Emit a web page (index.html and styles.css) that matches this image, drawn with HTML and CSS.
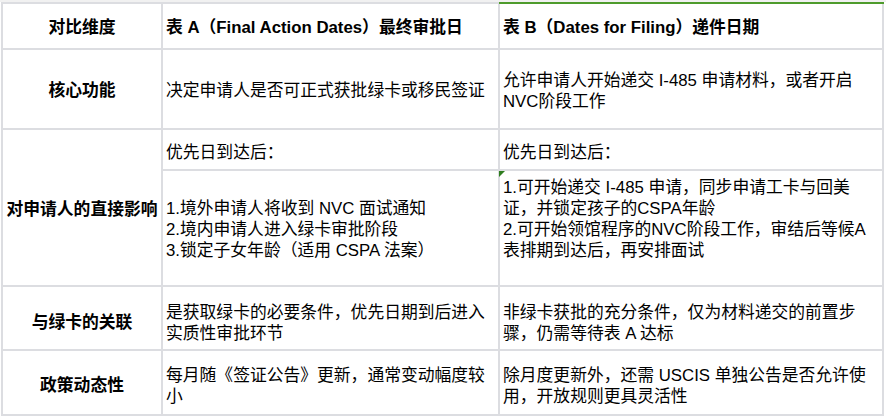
FILE: index.html
```html
<!DOCTYPE html>
<html lang="zh-CN">
<head>
<meta charset="utf-8">
<title>表 A 与 表 B 对比</title>
<link rel="stylesheet" href="styles.css">
</head>
<body>
<div class="sheet">
  <div class="cell head key r-head">对比维度</div>
  <div class="cell head c2 r-head">表 A（Final Action Dates）最终审批日</div>
  <div class="cell head c3 r-head active">表 B（Dates for Filing）递件日期</div>

  <div class="cell key r-2">核心功能</div>
  <div class="cell c2 r-2">决定申请人是否可正式获批绿卡或移民签证</div>
  <div class="cell c3 r-2">允许申请人开始递交 I-485 申请材料，或者开启NVC阶段工作</div>

  <div class="cell key span2 r-3">对申请人的直接影响</div>
  <div class="cell c2 r-3a">优先日到达后：</div>
  <div class="cell c3 r-3a">优先日到达后：</div>
  <div class="cell c2 top r-3b lead-blank">
    <div>1.境外申请人将收到 NVC 面试通知</div>
    <div>2.境内申请人进入绿卡审批阶段</div>
    <div>3.锁定子女年龄（适用 CSPA 法案）</div>
  </div>
  <div class="cell c3 top r-3b noted">
    <div>1.可开始递交 I-485 申请，同步申请工卡与回美证，并锁定孩子的CSPA年龄</div>
    <div>2.可开始领馆程序的NVC阶段工作，审结后等候A表排期到达后，再安排面试</div>
  </div>

  <div class="cell key r-4">与绿卡的关联</div>
  <div class="cell c2 r-4">是获取绿卡的必要条件，优先日期到后进入实质性审批环节</div>
  <div class="cell c3 r-4">非绿卡获批的充分条件，仅为材料递交的前置步骤，仍需等待表 A 达标</div>

  <div class="cell key r-5">政策动态性</div>
  <div class="cell c2 r-5">每月随《签证公告》更新，通常变动幅度较小</div>
  <div class="cell c3 r-5">除月度更新外，还需 USCIS 单独公告是否允许使用，开放规则更具灵活性</div>
</div>
</body>
</html>
```

FILE: styles.css
```css
html {
  background: #ffffff;
}

body {
  margin: 0;
  border-top: 2px solid #f1f1f1;
  font-family: "Liberation Sans", "Noto Sans CJK SC", sans-serif;
  font-size: 16.8px;
  line-height: 21px;
  color: #000000;
}

.sheet {
  display: grid;
  grid-template-columns: 158px 335px 382px;
  grid-template-rows: 44px 78px 39px 114px 62px 63px;
  gap: 2px;
  padding: 2px;
  margin-left: 1px;
  width: max-content;
  background: #dcdde1;
}

.cell {
  position: relative;
  background: #ffffff;
  display: flex;
  flex-direction: column;
  justify-content: center;
}

.c2 {
  padding: 0 4px 0 3px;
}

.c3 {
  padding: 0 14px 0 3px;
}

.cell.top {
  justify-content: flex-start;
}

.key {
  font-weight: bold;
  align-items: center;
  text-align: center;
  padding: 0 2px;
}

.head {
  font-weight: bold;
}

.span2 {
  grid-row: span 2;
}

.r-head { padding-top: 3px; }
.r-2 { padding-top: 3px; }
.r-3 { padding-top: 4px; }
.r-3a { padding-top: 6px; }
.r-3b { padding-top: 6px; }
.r-3b.lead-blank { padding-top: 27px; }
.r-4 { padding-top: 9px; }
.r-5 { padding-top: 6px; }

.key.r-5 { padding-top: 5px; }

.active::before {
  content: "";
  position: absolute;
  left: -1px;
  right: -2px;
  top: -2px;
  height: 2px;
  background: #4e9b2c;
}

.noted::before {
  content: "";
  position: absolute;
  left: -1px;
  top: 0;
  width: 0;
  height: 0;
  border-top: 6px solid #2f7d1f;
  border-right: 6px solid transparent;
}
```
